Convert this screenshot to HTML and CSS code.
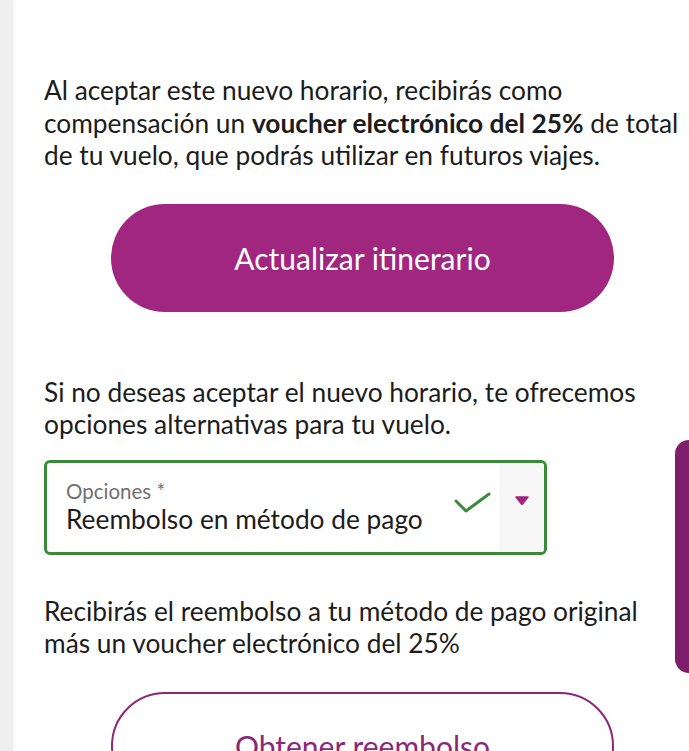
FILE: index.html
```html
<!DOCTYPE html>
<html lang="es">
<head>
<meta charset="utf-8">
<link rel="stylesheet" href="styles.css">
</head>
<body>
<div class="page">
  <aside class="rail"></aside>
  <main class="content">
    <p class="text first">Al aceptar este nuevo horario, recibirás como compensación un <strong>voucher electrónico del 25%</strong> de total de tu vuelo, que podrás utilizar en futuros viajes.</p>
    <div class="btn-row"><button class="btn btn-primary">Actualizar itinerario</button></div>
    <p class="text second">Si no deseas aceptar el nuevo horario, te ofrecemos opciones alternativas para tu vuelo.</p>
    <div class="select">
      <div class="select-main">
        <span class="select-label">Opciones *</span>
        <span class="select-value">Reembolso en método de pago</span>
      </div>
      <svg class="check" width="38" height="22" viewBox="0 0 38 22"><path d="M2 9 L12 19 L35 2" fill="none" stroke="#3c8a3c" stroke-width="3" stroke-linecap="round" stroke-linejoin="round"/></svg>
      <div class="select-arrow"><svg width="14" height="9" viewBox="0 0 14 9"><path d="M1 1 H13 L7.5 8 Q7 8.6 6.5 8 Z" fill="#a0267f" stroke="#a0267f" stroke-width="1.5" stroke-linejoin="round"/></svg></div>
    </div>
    <p class="text third">Recibirás el reembolso a tu método de pago original más un voucher electrónico del 25%</p>
    <div class="btn-row"><button class="btn btn-outline">Obtener reembolso</button></div>
  </main>
  <div class="side-tab"></div>
</div>
</body>
</html>
```
FILE: styles.css
```css
html, body {
  margin: 0;
  padding: 0;
  background: #ffffff;
}
body {
  font-family: Lato, "Open Sans", sans-serif;
  color: #1c1c1c;
  overflow: hidden;
  height: 751px;
}
.page {
  position: relative;
  display: flex;
  height: 751px;
}
.rail {
  width: 13px;
  flex: none;
  background: #eeeeee;
  box-shadow: 1px 0 3px rgba(0,0,0,0.06);
}
.content {
  width: 637px;
  padding-left: 31px;
  padding-top: 74px;
}
.text {
  margin: 0;
  font-size: 26.3px;
  line-height: 32.5px;
}
.text strong {
  font-weight: 700;
}
.btn-row {
  display: flex;
  justify-content: center;
}
.btn {
  width: 503px;
  height: 108px;
  border-radius: 54px;
  font-family: Lato, sans-serif;
  font-size: 30px;
  box-sizing: border-box;
}
.btn-primary {
  margin-top: 32px;
  background: #a0267f;
  border: none;
  color: #ffffff;
}
.btn-outline {
  margin-top: 32px;
  background: #ffffff;
  border: 2px solid #8c2676;
  color: #8c2676;
}
.second {
  margin-top: 64px;
}
.select {
  margin-top: 19px;
  width: 503px;
  height: 95px;
  box-sizing: border-box;
  border: 3px solid #3a8a3a;
  border-radius: 6px;
  display: flex;
  align-items: center;
  overflow: hidden;
}
.select-main {
  flex: 1;
  display: flex;
  flex-direction: column;
  padding-left: 19px;
  padding-top: 2px;
}
.select-label {
  font-size: 20.5px;
  color: #707070;
  line-height: 22px;
}
.select-value {
  font-size: 26.3px;
  line-height: 34px;
  color: #1c1c1c;
}
.check {
  margin-right: 7px;
  margin-top: -8px;
}
.select-arrow {
  width: 45px;
  align-self: stretch;
  background: #f7f7f7;
  display: flex;
  align-items: center;
  justify-content: center;
  padding-bottom: 14px;
  box-sizing: border-box;
}
.third {
  margin-top: 40px;
}
.side-tab {
  position: absolute;
  right: 0;
  top: 440px;
  width: 14px;
  height: 233px;
  background: #7d1f6c;
  border-radius: 14px 0 0 14px;
}
```
